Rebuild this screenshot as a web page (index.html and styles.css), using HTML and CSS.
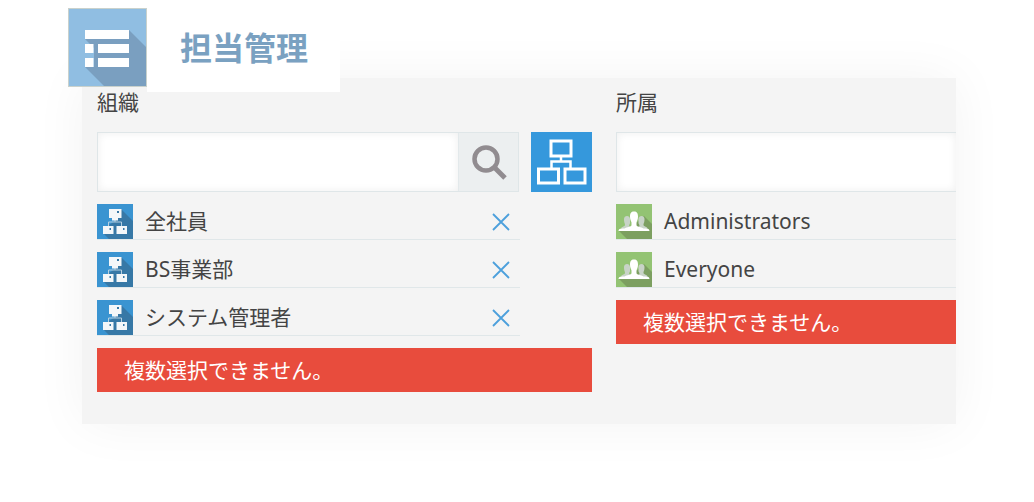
FILE: index.html
```html
<!DOCTYPE html>
<html lang="ja">
<head>
<meta charset="utf-8">
<title>担当管理</title>
<link rel="stylesheet" href="styles.css">
</head>
<body>
<svg class="symbols" aria-hidden="true">
  <symbol id="org" viewBox="0 0 36 35">
    <path fill="#3a94d1" d="M0 0h36v35H0z"/>
    <path fill="#3778a6" d="M24 5l12 12v18H12l-6-6 6-8 6-4z"/>
    <path fill="none" stroke="#b5cfe0" d="M18 14v4M11.500 22v-4h13v4"/>
    <path fill="#f4f7f9" d="M12 5h12.500v9H12zM15 14h6v2.500h-6zM6 22h10.500v8H6zM19.500 22H30v8H19.500z"/>
    <path fill="#3778a6" d="M20 7h2v2h-2zM12.500 24h1.500v2h-1.500zM26 24h1.500v2H26z"/>
  </symbol>
  <symbol id="group" viewBox="0 0 36 35">
    <path fill="#93c373" d="M0 0h36v35H0z"/>
    <path fill="#7c9f60" d="M28 12l8 8v15H11l-8-8 12-3z"/>
    <path fill="#c8d3c7" d="M8 15c0-4 6-4 6 0v4c0 1-1 1.500-1 3l3 3H5c0-3 4-2 4-4 0-2-1-2-1-6zM28.500 15c0-4-6-4-6 0v4c0 1 1 1.500 1 3l-3 3h11c0-3-4-2-4-4 0-2 1-2 1-6z"/>
    <path fill="#fff" d="M18 7.500c3 0 4 2 4 5s-1 4-1.500 6v2.500c0 2 5 2 7 3.500 3 0 6 0 6 2.500h-31c0-2.500 3-2.500 6-2.500 2-1.500 7-1.500 7-3.500v-2.500c-.5-2-1.500-3-1.500-6s1-5 4-5z"/>
  </symbol>
  <symbol id="cross" viewBox="0 0 18 18">
    <path fill="none" stroke="#4ca0dc" stroke-width="1.800" d="M1 1l16 16M17 1L1 17"/>
  </symbol>
</svg>

<header class="heading">
  <svg class="heading-icon" viewBox="0 0 79 79" aria-hidden="true">
    <path fill="#90bee2" stroke="#c9d1cc" stroke-width="2" d="M0 0h79v79H0z"/>
    <path fill="#7a9fc0" d="M61 22l17 17v39H36L17 59h9V40l-9-9z"/>
    <path fill="#fff" d="M17 22h44v9H17zM17 36h8.500v9H17zM30 36h31v9H30zM17 50h8.500v9H17zM30 50h31v9H30z"/>
  </svg>
  <h1 class="title">担当管理</h1>
</header>

<main class="panel">
  <section class="column">
    <label class="label" for="org-search">組織</label>
    <div class="search">
      <div class="field">
        <input class="input" id="org-search" type="text">
        <button class="search-button" type="button" aria-label="検索">
          <svg width="40" height="40" viewBox="0 0 40 40" aria-hidden="true">
            <circle cx="17" cy="17" r="11.500" fill="none" stroke="#918c90" stroke-width="4.500"/>
            <path d="M25 25l11 11" stroke="#918c90" stroke-width="5"/>
          </svg>
        </button>
      </div>
      <button class="tree-button" type="button" aria-label="組織図">
        <svg width="60" height="60" viewBox="0 0 60 60" aria-hidden="true">
          <path fill="none" stroke="#fff" stroke-width="3" d="M20 9h20v15H20zM7.500 37h20v14h-20zM34 37h20v14H34z"/>
          <path fill="none" stroke="#fff" stroke-width="2.500" d="M30 24v6M20.500 36v-6.500h19V36"/>
        </svg>
      </button>
    </div>
    <ul class="list list-narrow">
      <li class="item"><svg class="item-icon" aria-hidden="true"><use href="#org"/></svg><span class="name">全社員</span><button class="remove" type="button" aria-label="全社員を削除"><svg width="18" height="18"><use href="#cross"/></svg></button></li>
      <li class="item"><svg class="item-icon" aria-hidden="true"><use href="#org"/></svg><span class="name">BS事業部</span><button class="remove" type="button" aria-label="BS事業部を削除"><svg width="18" height="18"><use href="#cross"/></svg></button></li>
      <li class="item"><svg class="item-icon" aria-hidden="true"><use href="#org"/></svg><span class="name">システム管理者</span><button class="remove" type="button" aria-label="システム管理者を削除"><svg width="18" height="18"><use href="#cross"/></svg></button></li>
    </ul>
    <p class="alert">複数選択できません。</p>
  </section>

  <section class="column">
    <label class="label" for="group-search">所属</label>
    <div class="search">
      <div class="field field-open">
        <input class="input" id="group-search" type="text">
      </div>
    </div>
    <ul class="list">
      <li class="item"><svg class="item-icon" aria-hidden="true"><use href="#group"/></svg><span class="name">Administrators</span></li>
      <li class="item"><svg class="item-icon" aria-hidden="true"><use href="#group"/></svg><span class="name">Everyone</span></li>
    </ul>
    <p class="alert">複数選択できません。</p>
  </section>
</main>
</body>
</html>
```
FILE: styles.css
```css
* {
  box-sizing: border-box;
}

body {
  margin: 0;
  padding: 8px 78px 78px 68px;
  background: #fff;
  color: #444;
  font: 21px/34px "Noto Sans", "Noto Sans CJK JP", sans-serif;
}

button {
  padding: 0;
  border: 0;
  cursor: pointer;
}

.symbols {
  display: block;
  width: 0;
  height: 0;
}

.heading {
  position: relative;
  z-index: 1;
  display: flex;
  align-items: flex-start;
  width: fit-content;
  margin-bottom: -14px;
}

.heading-icon {
  width: 79px;
  height: 79px;
}

.title {
  margin: 0;
  padding: 0 32px 8px 33px;
  background: #fff;
  color: #7aa1c1;
  font: 700 32px/76px "Noto Sans CJK JP", sans-serif;
}

.panel {
  display: grid;
  grid-template-columns: 495fr 340fr;
  column-gap: 24px;
  margin-left: 14px;
  padding: 6px 0 32px 15px;
  background: #f4f4f4;
  box-shadow: 0 0 50px rgba(0, 0, 0, 0.05);
}

.column {
  display: flex;
  flex-direction: column;
  gap: 12px;
  min-width: 0;
}

.label {
  padding-bottom: 2px;
  font-family: "Noto Sans CJK JP", sans-serif;
}

.search {
  display: flex;
  gap: 12px;
}

.field {
  display: flex;
  flex: 1;
  height: 60px;
  border: 1px solid #dfe6e8;
}

.field-open {
  border-right: 0;
}

.input {
  flex: 1;
  min-width: 0;
  padding: 0 12px;
  border: 0;
  outline: 0;
  background: #fff;
  box-shadow: inset 0 0 8px rgba(0, 0, 0, 0.07);
  font: inherit;
}

.search-button {
  display: flex;
  align-items: center;
  justify-content: center;
  width: 60px;
  border-left: 1px solid #e3e9eb;
  background: #eceff0;
}

.tree-button {
  display: flex;
  width: 61px;
  background: #3598dc;
}

.list {
  display: flex;
  flex-direction: column;
  gap: 12px;
  margin: 0;
  padding: 0;
  list-style: none;
}

.list-narrow {
  margin-right: 72px;
}

.item {
  display: flex;
  align-items: center;
  gap: 12px;
  height: 36px;
  border-bottom: 1px solid #e0e7e9;
}

.item-icon {
  width: 36px;
  height: 35px;
}

.name {
  flex: 1;
  padding-bottom: 2px;
  line-height: 32px;
}

.remove {
  display: flex;
  margin-right: 10px;
  background: none;
}

.alert {
  margin: 0;
  padding: 0 27px;
  background: #e84c3d;
  color: #fff;
  line-height: 44px;
}
```
